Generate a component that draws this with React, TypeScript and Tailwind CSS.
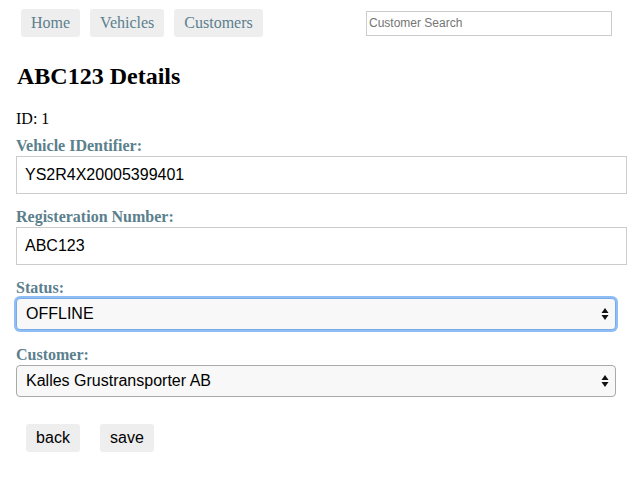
import React from "react";

const serif = { fontFamily: '"Liberation Serif", "Times New Roman", serif' };

function Field({ label, value }: { label: string; value: string }) {
  return (
    <div className="mb-[14px]">
      <label className="block text-[16px] font-bold leading-[18px] text-[#5b808d] h-[19px]">{label}</label>
      <input
        readOnly
        value={value}
        className="w-[611px] h-[38px] border border-[#cccccc] px-2 text-[16px] text-black font-['Liberation_Sans',Arial,sans-serif] outline-none"
      />
    </div>
  );
}

function SelectBox({ value, focused }: { value: string; focused?: boolean }) {
  return (
    <div
      className={
        "w-[600px] h-[32px] rounded-[4px] bg-[#f8f8f8] flex items-center justify-between pl-[9px] pr-[6px] text-[16px] text-black font-['Liberation_Sans',Arial,sans-serif] " +
        (focused
          ? "border border-[#7aacea] shadow-[0_0_0_2px_#8fbdf5]"
          : "border border-[#a9a9a9]")
      }
    >
      <span>{value}</span>
      <svg width="8" height="14" viewBox="0 0 8 14">
        <path d="M4 1 L7.5 6 L0.5 6 Z" fill="#111" />
        <path d="M4 13 L7.5 8 L0.5 8 Z" fill="#111" />
      </svg>
    </div>
  );
}

export default function App() {
  return (
    <main className="bg-white min-h-[477px] pl-4 pt-[9px] text-black" style={serif}>
      <nav className="flex items-center w-[596px]">
        <div className="flex gap-[10px] ml-[5px]">
          {["Home", "Vehicles", "Customers"].map((n) => (
            <button
              key={n}
              className="h-[28px] px-[10px] bg-[#eeeeee] rounded-[3px] text-[16px] text-[#5b808d]"
              style={serif}
            >
              {n}
            </button>
          ))}
        </div>
        <input
          readOnly
          placeholder="Customer Search"
          className="ml-auto w-[246px] h-[25px] border border-[#cccccc] px-[2px] text-[12px] placeholder:text-[#757575] font-['Liberation_Sans',Arial,sans-serif] outline-none"
        />
      </nav>
      <h1 className="text-[24px] font-bold leading-[28px] mt-[25px] ml-px">ABC123 Details</h1>
      <p className="text-[16px] leading-[18px] mt-[20px] mb-[9px]">ID: 1</p>
      <Field label="Vehicle IDentifier:" value="YS2R4X20005399401" />
      <Field label="Registeration Number:" value="ABC123" />
      <div className="mb-[16px]">
        <label className="block text-[16px] font-bold leading-[18px] text-[#5b808d] h-[19px]">Status:</label>
        <SelectBox value="OFFLINE" focused />
      </div>
      <div>
        <label className="block text-[16px] font-bold leading-[18px] text-[#5b808d] h-[19px]">Customer:</label>
        <SelectBox value="Kalles Grustransporter AB" />
      </div>
      <div className="flex gap-[20px] ml-[10px] mt-[27px]">
        <button className="h-[28px] w-[54px] bg-[#eeeeee] rounded-[3px] text-[16px] font-['Liberation_Sans',Arial,sans-serif]">back</button>
        <button className="h-[28px] w-[54px] bg-[#eeeeee] rounded-[3px] text-[16px] font-['Liberation_Sans',Arial,sans-serif]">save</button>
      </div>
    </main>
  );
}
